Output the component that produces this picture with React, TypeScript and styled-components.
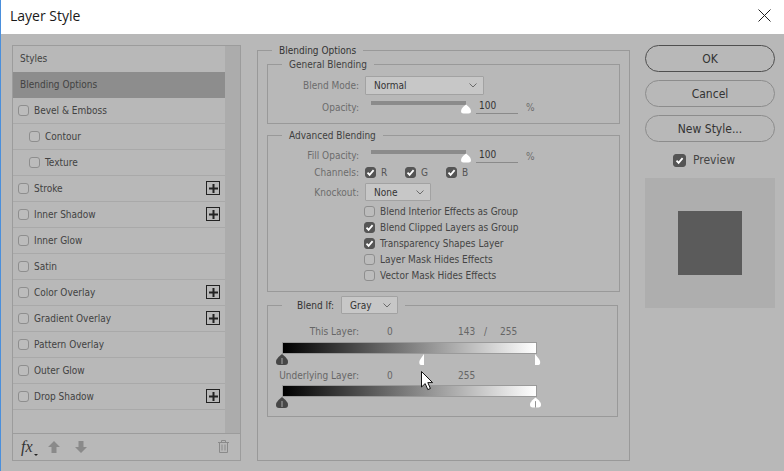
import React from 'react'
import styled, { createGlobalStyle } from 'styled-components'

const GlobalStyle = createGlobalStyle`
	html, body {
		margin: 0;
		padding: 0;
		background: #b8b8b8;
	}
	* {
		box-sizing: border-box;
	}
`

const Dialog = styled.div`
	width: 784px;
	height: 471px;
	overflow: hidden;
	display: flex;
	flex-direction: column;
	background: #b8b8b8;
	border-left: 1px solid #4a8fdc;
	font-family: 'DejaVu Sans', 'Liberation Sans', sans-serif;
	font-stretch: condensed;
	font-size: 10px;
	color: #3c3c3c;
`

const TitleBar = styled.header`
	height: 34px;
	flex: none;
	display: flex;
	align-items: center;
	justify-content: space-between;
	background: #ffffff;
	padding: 0 13px 4px 9px;
	color: #1a1a1a;
	font-family: 'Open Sans', sans-serif;
	font-stretch: normal;
	font-size: 14px;
`

const Body = styled.main`
	flex: 1;
	display: flex;
	align-items: flex-start;
	padding: 11px 0 0 11px;
`

/* left list */
const StylesPanel = styled.section`
	width: 229px;
	height: 416px;
	flex: none;
	display: flex;
	flex-direction: column;
	border: 1px solid #9c9c9c;
	margin-right: 16px;
`

const ListArea = styled.div`
	flex: 1;
	display: flex;
	min-height: 0;
	border-bottom: 1px solid #9c9c9c;
`

const List = styled.ul`
	flex: 1;
	list-style: none;
	margin: 0;
	padding: 0;
`

const Scrollbar = styled.div`
	width: 15px;
	flex: none;
	background: #acacac;
`

const ListRow = styled.li<{ $selected?: boolean; $indent?: boolean; $plain?: boolean }>`
	height: 26px;
	display: flex;
	align-items: center;
	gap: 5px;
	padding: 0 5px 1px ${(p) => (p.$plain ? 7 : p.$indent ? 16 : 5)}px;
	background: ${(p) => (p.$selected ? '#8d8d8d' : 'transparent')};
	border-bottom: 1px solid ${(p) => (p.$selected || p.$plain ? 'transparent' : '#a9a9a9')};
	color: #424242;
`

const RowName = styled.span`
	flex: 1;
`

const PlusBox = styled.span`
	width: 14px;
	height: 14px;
	flex: none;
	display: flex;
	align-items: center;
	justify-content: center;
	border: 1px solid #222222;
	color: #222222;
`

const PanelFooter = styled.footer`
	height: 26px;
	flex: none;
	display: flex;
	align-items: center;
	padding: 0 11px 1px 8px;
`

const FxLabel = styled.span`
	position: relative;
	width: 27px;
	font-family: 'Liberation Serif', serif;
	font-style: italic;
	font-stretch: normal;
	font-size: 16px;
	color: #333333;

	&::after {
		content: '';
		position: absolute;
		left: 13px;
		bottom: 0;
		border: 2px solid transparent;
		border-top: 2px solid #222222;
		border-bottom: 0;
	}
`

const FooterIcon = styled.svg`
	flex: none;
	margin-right: 15px;
`

const TrashIcon = styled.svg`
	flex: none;
	margin-left: auto;
`

/* checkboxes */
const Box = styled.span<{ $checked?: boolean }>`
	width: 11px;
	height: 11px;
	flex: none;
	display: flex;
	align-items: center;
	justify-content: center;
	border-radius: 3px;
	border: 1px solid ${(p) => (p.$checked ? '#555555' : '#8e8e8e')};
	background: ${(p) => (p.$checked ? '#555555' : '#bcbcbc')};
`

const Check: React.FC<{ checked?: boolean }> = ({ checked }) => (
	<Box $checked={checked}>
		{checked && (
			<svg width="9" height="9" viewBox="0 0 9 9">
				<path d="M1.5 4.6 L3.6 6.8 L7.6 2.2" fill="none" stroke="#ffffff" strokeWidth="1.8" />
			</svg>
		)}
	</Box>
)

/* centre column */
const OptionsGroup = styled.fieldset`
	width: 373px;
	height: 418px;
	flex: none;
	margin: -2px 15px 0 0;
	padding: 0 9px;
	border: 1px solid #999999;
	min-inline-size: 0;
`

const GroupTitle = styled.legend`
	height: 14px;
	margin-left: 5px;
	padding: 0 7px;
	line-height: 16px;
	color: #333333;
`

const SubGroup = styled.fieldset<{ $narrow?: boolean; $gap: number }>`
	width: ${(p) => (p.$narrow ? 351 : 353)}px;
	margin: ${(p) => p.$gap}px 0 0;
	padding: 0 0 8px;
	border: 1px solid #999999;
	min-inline-size: 0;
`

const SubTitle = styled.legend`
	height: 14px;
	margin-left: 14px;
	padding: 0 7px;
	line-height: 16px;
	color: #3f3f3f;
`

const BlendIfTitle = styled.legend`
	display: flex;
	align-items: center;
	margin-left: 14px;
	padding: 0 7px 0 15px;
	color: #333333;
`

const BlendIfLabel = styled.span`
	width: 44px;
	flex: none;
`

const FormRow = styled.div<{ $height: number; $top?: number }>`
	display: flex;
	align-items: center;
	height: ${(p) => p.$height}px;
	margin-top: ${(p) => p.$top ?? 0}px;
`

const FieldLabel = styled.label<{ $low?: boolean }>`
	width: 91px;
	flex: none;
	margin-right: 6px;
	padding-top: ${(p) => (p.$low ? 2 : 0)}px;
	text-align: right;
	color: #6c6c6c;
	white-space: nowrap;
`

const SelectBox = styled.div<{ $width: number }>`
	width: ${(p) => p.$width}px;
	height: 100%;
	flex: none;
	display: flex;
	align-items: center;
	justify-content: space-between;
	padding: 0 6px 0 8px;
	background: #c7c7c7;
	border: 1px solid #a2a2a2;
	border-radius: 1px;
	color: #333333;
`

const SliderTrack = styled.div`
	position: relative;
	width: 95px;
	height: 100%;
	flex: none;
	margin: 0 10px 0 6px;

	&::before {
		content: '';
		position: absolute;
		top: 4px;
		left: 0;
		right: 0;
		height: 4px;
		background: #8b8b8b;
	}
`

const SliderThumb = styled.svg`
	position: absolute;
	top: 7px;
	right: -5px;
`

const NumberField = styled.div`
	width: 42px;
	height: 16px;
	flex: none;
	padding: 2px 0 0 3px;
	border-bottom: 1px solid #8a8a8a;
	color: #333333;
`

const Percent = styled.span`
	margin-left: 8px;
	padding-top: 2px;
	color: #6c6c6c;
`

const ChannelLabel = styled.span<{ $width: number }>`
	width: ${(p) => p.$width}px;
	flex: none;
	margin-left: 5px;
	color: #555555;
`

const CheckColumn = styled.div`
	margin-top: 2px;
	padding-left: 96px;
`

const CheckRow = styled.div`
	height: 16px;
	display: flex;
	align-items: center;
	gap: 5px;
	color: #444444;
`

/* blend if sliders */
const RangeBlock = styled.div`
	padding-top: 9px;
`

const ValueRow = styled.div<{ $top?: number }>`
	display: grid;
	grid-template-columns: 91px 99px 26px 16px auto;
	align-items: center;
	height: 16px;
	margin-top: ${(p) => p.$top ?? 0}px;
	color: #666666;
`

const ValueLabel = styled.span`
	text-align: right;
	white-space: nowrap;
`

const ZeroValue = styled.span`
	padding-left: 28px;
`

const GradientBar = styled.div<{ $top: number }>`
	width: 255px;
	height: 12px;
	margin: ${(p) => p.$top}px 0 0 14px;
	background: linear-gradient(to right, #000000, #ffffff);
	border: 1px solid #9a9a9a;
`

const ThumbLane = styled.div`
	position: relative;
	width: 255px;
	height: 11px;
	margin-left: 14px;
`

const LaneThumb = styled.svg<{ $at: number }>`
	position: absolute;
	top: 0;
	left: ${(p) => p.$at}px;
`

/* right column */
const ActionColumn = styled.aside`
	width: 130px;
	flex: none;
	display: flex;
	flex-direction: column;
`

const PillButton = styled.button<{ $primary?: boolean }>`
	height: 27px;
	margin-bottom: 8px;
	padding: 0;
	background: transparent;
	border: 1px solid ${(p) => (p.$primary ? '#4f4f4f' : '#8c8c8c')};
	border-radius: 14px;
	color: #333333;
	font-family: 'DejaVu Sans', 'Liberation Sans', sans-serif;
	font-stretch: condensed;
	font-size: 12px;
`

const PreviewToggle = styled.div`
	display: flex;
	align-items: center;
	gap: 7px;
	height: 18px;
	margin: 1px 0 9px 28px;
	font-size: 12px;
	color: #444444;

	${Box} {
		width: 13px;
		height: 13px;
	}
`

const PreviewPane = styled.div`
	height: 130px;
	display: flex;
	align-items: center;
	justify-content: center;
	background: #aeaeae;
`

const PreviewSwatch = styled.div`
	width: 64px;
	height: 64px;
	background: #5b5b5b;
`

const MouseCursor = styled.svg`
	position: absolute;
	left: 421px;
	top: 371px;
`

const Chevron = () => (
	<svg width="8" height="5" viewBox="0 0 8 5">
		<path d="M0.5 0.5 L4 4 L7.5 0.5" fill="none" stroke="#6a6a6a" />
	</svg>
)

const Plus = () => (
	<svg width="9" height="9" viewBox="0 0 9 9">
		<path d="M4.5 0 V9 M0 4.5 H9" stroke="currentColor" strokeWidth="2" />
	</svg>
)

const DROPLET = 'M6 0 L9.5 3 Q12 5.5 12 8 Q12 11 9 11 H3 Q0 11 0 8 Q0 5.5 2.5 3 Z'

const DarkThumb: React.FC<{ at: number }> = ({ at }) => (
	<LaneThumb $at={at} width="12" height="11" viewBox="0 0 12 11">
		<path d={DROPLET} fill="#474747" />
		<path d="M6 4 V10" stroke="#a8a8a8" />
	</LaneThumb>
)

const WhiteThumb: React.FC<{ at: number }> = ({ at }) => (
	<LaneThumb $at={at} width="11" height="11" viewBox="0 0 12 11">
		<path d={DROPLET} fill="#ffffff" />
		<path d="M6 4 V11" stroke="#8a8a8a" />
	</LaneThumb>
)

const LeftHalfThumb: React.FC<{ at: number }> = ({ at }) => (
	<LaneThumb $at={at} width="6" height="11" viewBox="0 0 6 11">
		<path d="M5 0 V11 H2 Q0.5 11 0.3 9 Q0 7 1.5 5 Z" fill="#ffffff" />
	</LaneThumb>
)

const RightHalfThumb: React.FC<{ at: number }> = ({ at }) => (
	<LaneThumb $at={at} width="6" height="11" viewBox="0 0 6 11">
		<path d="M0 0 L4 5 Q5.5 7 5.2 9 Q5 11 3.5 11 H0 Z" fill="#ffffff" />
	</LaneThumb>
)

const OpacitySlider = () => (
	<SliderTrack>
		<SliderThumb width="10" height="10" viewBox="0 0 12 11">
			<path d={DROPLET} fill="#ffffff" />
		</SliderThumb>
	</SliderTrack>
)

const EFFECTS = [
	{ name: 'Bevel & Emboss' },
	{ name: 'Contour', indent: true },
	{ name: 'Texture', indent: true },
	{ name: 'Stroke', plus: true },
	{ name: 'Inner Shadow', plus: true },
	{ name: 'Inner Glow' },
	{ name: 'Satin' },
	{ name: 'Color Overlay', plus: true },
	{ name: 'Gradient Overlay', plus: true },
	{ name: 'Pattern Overlay' },
	{ name: 'Outer Glow' },
	{ name: 'Drop Shadow', plus: true },
]

const GROUP_CHECKS = [
	{ name: 'Blend Interior Effects as Group' },
	{ name: 'Blend Clipped Layers as Group', checked: true },
	{ name: 'Transparency Shapes Layer', checked: true },
	{ name: 'Layer Mask Hides Effects' },
	{ name: 'Vector Mask Hides Effects' },
]

export default function App() {
	return (
		<Dialog>
			<GlobalStyle />
			<TitleBar>
				<span>Layer Style</span>
				<svg width="13" height="13" viewBox="0 0 13 13">
					<path d="M0.5 0.5 L12.5 12.5 M12.5 0.5 L0.5 12.5" stroke="#222222" />
				</svg>
			</TitleBar>
			<Body>
				<StylesPanel>
					<ListArea>
						<List>
							<ListRow $plain>Styles</ListRow>
							<ListRow $plain $selected>
								Blending Options
							</ListRow>
							{EFFECTS.map((effect) => (
								<ListRow key={effect.name} $indent={effect.indent}>
									<Check />
									<RowName>{effect.name}</RowName>
									{effect.plus && (
										<PlusBox>
											<Plus />
										</PlusBox>
									)}
								</ListRow>
							))}
						</List>
						<Scrollbar />
					</ListArea>
					<PanelFooter>
						<FxLabel>fx</FxLabel>
						<FooterIcon width="12" height="12" viewBox="0 0 12 12">
							<path d="M6 0 L12 6 H8.5 V12 H3.5 V6 H0 Z" fill="#8a8a8a" />
						</FooterIcon>
						<FooterIcon width="12" height="12" viewBox="0 0 12 12">
							<path d="M6 12 L12 6 H8.5 V0 H3.5 V6 H0 Z" fill="#8a8a8a" />
						</FooterIcon>
						<TrashIcon width="11" height="13" viewBox="0 0 11 13">
							<path
								d="M0 2.5 H11 M3.5 2.5 V0.5 H7.5 V2.5 M1.5 2.5 V12.5 H9.5 V2.5 M4 4.5 V10.5 M7 4.5 V10.5"
								fill="none"
								stroke="#8a8a8a"
							/>
						</TrashIcon>
					</PanelFooter>
				</StylesPanel>

				<OptionsGroup>
					<GroupTitle>Blending Options</GroupTitle>
					<SubGroup $gap={0}>
						<SubTitle>General Blending</SubTitle>
						<FormRow $height={19} $top={5}>
							<FieldLabel>Blend Mode:</FieldLabel>
							<SelectBox $width={119}>
								Normal
								<Chevron />
							</SelectBox>
						</FormRow>
						<FormRow $height={18} $top={2}>
							<FieldLabel $low>Opacity:</FieldLabel>
							<OpacitySlider />
							<NumberField>100</NumberField>
							<Percent>%</Percent>
						</FormRow>
					</SubGroup>
					<SubGroup $gap={4}>
						<SubTitle>Advanced Blending</SubTitle>
						<FormRow $height={18} $top={4}>
							<FieldLabel>Fill Opacity:</FieldLabel>
							<OpacitySlider />
							<NumberField>100</NumberField>
							<Percent>%</Percent>
						</FormRow>
						<FormRow $height={16}>
							<FieldLabel>Channels:</FieldLabel>
							<Check checked />
							<ChannelLabel $width={24}>R</ChannelLabel>
							<Check checked />
							<ChannelLabel $width={25}>G</ChannelLabel>
							<Check checked />
							<ChannelLabel $width={10}>B</ChannelLabel>
						</FormRow>
						<FormRow $height={18} $top={3}>
							<FieldLabel>Knockout:</FieldLabel>
							<SelectBox $width={66}>
								None
								<Chevron />
							</SelectBox>
						</FormRow>
						<CheckColumn>
							{GROUP_CHECKS.map((item) => (
								<CheckRow key={item.name}>
									<Check checked={item.checked} />
									{item.name}
								</CheckRow>
							))}
						</CheckColumn>
					</SubGroup>
					<SubGroup $gap={4} $narrow>
						<BlendIfTitle>
							<BlendIfLabel>Blend If:</BlendIfLabel>
							<FormRow $height={18}>
								<SelectBox $width={57}>
									Gray
									<Chevron />
								</SelectBox>
							</FormRow>
						</BlendIfTitle>
						<RangeBlock>
							<ValueRow>
								<ValueLabel>This Layer:</ValueLabel>
								<ZeroValue>0</ZeroValue>
								<span>143</span>
								<span>/</span>
								<span>255</span>
							</ValueRow>
							<GradientBar $top={3} />
							<ThumbLane>
								<DarkThumb at={-6} />
								<LeftHalfThumb at={137} />
								<RightHalfThumb at={253} />
							</ThumbLane>
							<ValueRow $top={2}>
								<ValueLabel>Underlying Layer:</ValueLabel>
								<ZeroValue>0</ZeroValue>
								<span>255</span>
							</ValueRow>
							<GradientBar $top={2} />
							<ThumbLane>
								<DarkThumb at={-6} />
								<WhiteThumb at={248} />
							</ThumbLane>
						</RangeBlock>
					</SubGroup>
				</OptionsGroup>

				<ActionColumn>
					<PillButton $primary>OK</PillButton>
					<PillButton>Cancel</PillButton>
					<PillButton>New Style...</PillButton>
					<PreviewToggle>
						<Check checked />
						Preview
					</PreviewToggle>
					<PreviewPane>
						<PreviewSwatch />
					</PreviewPane>
				</ActionColumn>
			</Body>
			<MouseCursor width="13" height="20" viewBox="0 0 13 20">
				<path
					d="M0.5 0.5 V16 L4.2 12.6 L6.8 18.6 L9.4 17.5 L6.8 11.6 H11.6 Z"
					fill="#ffffff"
					stroke="#111111"
				/>
			</MouseCursor>
		</Dialog>
	)
}
